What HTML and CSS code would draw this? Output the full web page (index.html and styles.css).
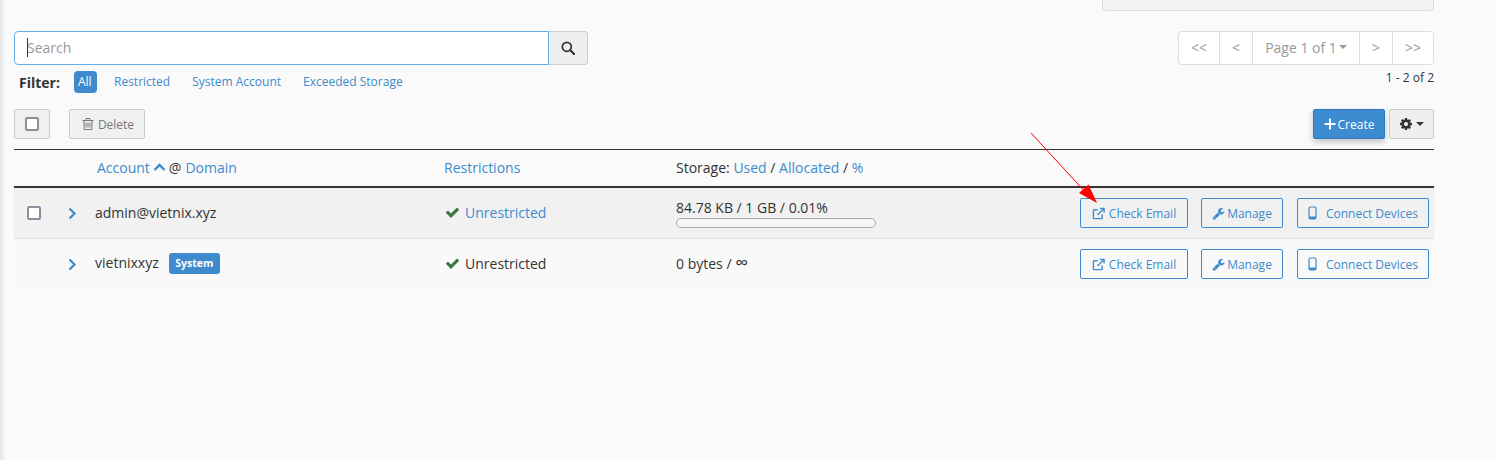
FILE: index.html
```html
<!DOCTYPE html>
<html lang="en">
<head>
<meta charset="utf-8">
<title>Email Accounts</title>
<link rel="stylesheet" href="styles.css">
</head>
<body>
<div class="page">
  <div class="notice-row"><div class="notice"></div></div>

  <div class="search-row">
    <div class="search-group">
      <div class="search-input"><span class="caret"></span><span class="placeholder">Search</span></div>
      <button class="search-btn"><svg class="i14" viewBox="0 0 14 14"><circle cx="5.800" cy="5.800" r="4.500" fill="none" stroke="#333" stroke-width="1.700"/><path d="M9.300 9.300L13 13" fill="none" stroke="#333" stroke-width="2.200" stroke-linecap="round"/></svg></button>
    </div>
    <div class="pager">
      <span class="pg pg-first">&lt;&lt;</span>
      <span class="pg pg-prev">&lt;</span>
      <span class="pg pg-page">Page 1 of 1<i class="caret-down"></i></span>
      <span class="pg pg-next">&gt;</span>
      <span class="pg pg-last">&gt;&gt;</span>
    </div>
  </div>

  <div class="filter-row">
    <div class="filters">
      <strong class="filter-label">Filter:</strong>
      <a class="pill active">All</a>
      <a class="pill">Restricted</a>
      <a class="pill">System Account</a>
      <a class="pill">Exceeded Storage</a>
    </div>
    <div class="count">1 - 2 of 2</div>
  </div>

  <div class="action-row">
    <div class="action-left">
      <button class="btn-box"><span class="checkbox"></span></button>
      <button class="btn-delete"><svg class="i-trash" viewBox="0 0 1792 1792"><path d="M704 736v576q0 14-9 23t-23 9h-64q-14 0-23-9t-9-23v-576q0-14 9-23t23-9h64q14 0 23 9t9 23zm256 0v576q0 14-9 23t-23 9h-64q-14 0-23-9t-9-23v-576q0-14 9-23t23-9h64q14 0 23 9t9 23zm256 0v576q0 14-9 23t-23 9h-64q-14 0-23-9t-9-23v-576q0-14 9-23t23-9h64q14 0 23 9t9 23zm128 724v-948h-896v948q0 22 7 40.500t14.500 27 10.500 8.500h832q3 0 10.500-8.500t14.500-27 7-40.500zm-672-1076h448l-48-117q-7-9-17-11h-317q-10 2-17 11zm928 32v64q0 14-9 23t-23 9h-96v948q0 83-47 143.500t-113 60.500h-832q-66 0-113-58.500t-47-141.500v-952h-96q-14 0-23-9t-9-23v-64q0-14 9-23t23-9h309l70-167q15-37 54-63t79-26h320q40 0 79 26t54 63l70 167h309q14 0 23 9t9 23z"/></svg>Delete</button>
    </div>
    <div class="action-right">
      <button class="btn-create"><svg class="i12" viewBox="0 0 12 12"><path d="M6 0.500v11M0.500 6h11" fill="none" stroke="currentColor" stroke-width="2"/></svg>Create</button>
      <button class="btn-gear"><svg class="i13" viewBox="0 0 1792 1792"><path d="M1152 896q0-106-75-181t-181-75-181 75-75 181 75 181 181 75 181-75 75-181zm512-109v222q0 12-8 23t-20 13l-185 28q-19 54-39 91 35 50 107 138 10 12 10 25t-9 23q-27 37-99 108t-94 71q-12 0-26-9l-138-108q-44 23-91 38-16 136-29 186-7 28-36 28h-222q-14 0-24.500-8.500t-11.500-21.500l-28-184q-49-16-90-37l-141 107q-10 9-25 9-14 0-25-11-126-114-165-168-7-10-7-23 0-12 8-23 15-21 51-66.500t54-70.500q-27-50-41-99l-183-27q-13-2-21-12.500t-8-23.500v-222q0-12 8-23t19-13l186-28q14-46 39-92-40-57-107-138-10-12-10-24 0-10 9-23 26-36 98.500-107.500t94.500-71.500q13 0 26 10l138 107q44-23 91-38 16-136 29-186 7-28 36-28h222q14 0 24.500 8.500t11.500 21.500l28 184q49 16 90 37l142-107q9-9 24-9 13 0 25 10 129 119 165 170 7 8 7 22 0 12-8 23-15 21-51 66.500t-54 70.500q26 50 41 98l183 28q13 2 21 12.500t8 23.500z"/></svg><i class="caret-down dark"></i></button>
    </div>
  </div>

  <div class="table">
    <div class="row head">
      <div class="c-sel"></div>
      <div class="c-acct head-acct"><a>Account</a><svg class="chev-up" viewBox="0 0 12 8"><path d="M1 7l5-5 5 5" fill="none" stroke="currentColor" stroke-width="2.400"/></svg><span class="at">@</span><a>Domain</a></div>
      <div class="c-rest"><a>Restrictions</a></div>
      <div class="c-stor">Storage: <a>Used</a> / <a>Allocated</a> / <a>%</a></div>
      <div class="c-act"></div>
    </div>

    <div class="row body alt">
      <div class="c-sel"><span class="checkbox"></span><svg class="chev" viewBox="0 0 9 13"><path d="M1.500 1.500l5 5-5 5" fill="none" stroke="currentColor" stroke-width="2.200"/></svg></div>
      <div class="c-acct"><span class="name">admin@vietnix.xyz</span></div>
      <div class="c-rest"><svg class="ok" viewBox="0 0 1792 1792"><path d="M1671 566q0 40-28 68l-724 724-136 136q-28 28-68 28t-68-28l-136-136-362-362q-28-28-28-68t28-68l136-136q28-28 68-28t68 28l294 295 656-657q28-28 68-28t68 28l136 136q28 28 28 68z"/></svg><a>Unrestricted</a></div>
      <div class="c-stor c-usage"><div class="usage">84.78 KB / 1 GB / 0.01%</div><div class="bar"></div></div>
      <div class="c-act">
        <a class="ab ab-check"><svg class="ai" viewBox="0 0 14 14"><path d="M11 8v3.500a1 1 0 0 1-1 1H2.500a1 1 0 0 1-1-1V4a1 1 0 0 1 1-1H6M6 8.500L12.500 2M8.500 1.500h4.500V6" fill="none" stroke="currentColor" stroke-width="1.500"/></svg>Check Email</a>
        <a class="ab ab-manage"><svg class="ai wr" viewBox="0 0 1792 1792"><path fill="currentColor" d="M448 1472q0-26-19-45t-45-19-45 19-19 45 19 45 45 19 45-19 19-45zm644-420l-682 682q-37 37-90 37-52 0-91-37l-106-108q-38-36-38-90 0-53 38-91l681-681q39 98 114.500 173.500t173.500 114.500zm634-435q0 39-23 106-47 134-164.500 217.500t-258.500 83.500q-185 0-316.500-131.500t-131.500-316.500 131.500-316.500 316.500-131.500q58 0 121.500 16.500t107.500 46.500q16 11 16 28t-16 28l-293 169v224l193 107q5-3 79-48.500t135.500-81 70.500-35.500q15 0 23.500 10t8.500 25z"/></svg>Manage</a>
        <a class="ab ab-conn"><svg class="ai ph" viewBox="0 0 9 14"><rect x="1" y="1" width="7" height="12" rx="1.500" fill="none" stroke="currentColor" stroke-width="1.200"/><path d="M1 10.500h7v1.500a1 1 0 0 1-1 1H2a1 1 0 0 1-1-1z" fill="currentColor"/></svg>Connect Devices</a>
      </div>
    </div>

    <div class="row body last">
      <div class="c-sel"><span class="checkbox hidden"></span><svg class="chev" viewBox="0 0 9 13"><path d="M1.500 1.500l5 5-5 5" fill="none" stroke="currentColor" stroke-width="2.200"/></svg></div>
      <div class="c-acct"><span class="name">vietnixxyz</span><span class="badge">System</span></div>
      <div class="c-rest"><svg class="ok" viewBox="0 0 1792 1792"><path d="M1671 566q0 40-28 68l-724 724-136 136q-28 28-68 28t-68-28l-136-136-362-362q-28-28-28-68t28-68l136-136q28-28 68-28t68 28l294 295 656-657q28-28 68-28t68 28l136 136q28 28 28 68z"/></svg><span>Unrestricted</span></div>
      <div class="c-stor"><div>0 bytes / <span class="inf">∞</span></div></div>
      <div class="c-act">
        <a class="ab ab-check"><svg class="ai" viewBox="0 0 14 14"><path d="M11 8v3.500a1 1 0 0 1-1 1H2.500a1 1 0 0 1-1-1V4a1 1 0 0 1 1-1H6M6 8.500L12.500 2M8.500 1.500h4.500V6" fill="none" stroke="currentColor" stroke-width="1.500"/></svg>Check Email</a>
        <a class="ab ab-manage"><svg class="ai wr" viewBox="0 0 1792 1792"><path fill="currentColor" d="M448 1472q0-26-19-45t-45-19-45 19-19 45 19 45 45 19 45-19 19-45zm644-420l-682 682q-37 37-90 37-52 0-91-37l-106-108q-38-36-38-90 0-53 38-91l681-681q39 98 114.500 173.500t173.500 114.500zm634-435q0 39-23 106-47 134-164.500 217.500t-258.500 83.500q-185 0-316.500-131.500t-131.500-316.500 131.500-316.500 316.500-131.500q58 0 121.500 16.500t107.500 46.500q16 11 16 28t-16 28l-293 169v224l193 107q5-3 79-48.500t135.500-81 70.500-35.500q15 0 23.500 10t8.500 25z"/></svg>Manage</a>
        <a class="ab ab-conn"><svg class="ai ph" viewBox="0 0 9 14"><rect x="1" y="1" width="7" height="12" rx="1.500" fill="none" stroke="currentColor" stroke-width="1.200"/><path d="M1 10.500h7v1.500a1 1 0 0 1-1 1H2a1 1 0 0 1-1-1z" fill="currentColor"/></svg>Connect Devices</a>
      </div>
    </div>
  </div>
</div>

<svg class="arrow" viewBox="0 0 1496 460"><path d="M1031 133L1088 195" stroke="#f00" stroke-width="1" fill="none"/><path d="M1079 193L1088.500 184.500L1097 203z" fill="#f00"/></svg>
</body>
</html>
```
FILE: styles.css
```css
* { box-sizing: border-box; }
html, body { margin: 0; height: 100%; }
body {
  background: #fafafa;
  font-family: "Open Sans", "Liberation Sans", sans-serif;
  font-size: 14px;
  color: #333;
  overflow: hidden;
  position: relative;
}
body::before {
  content: "";
  position: absolute;
  left: 0; top: 0; bottom: 0;
  width: 6px;
  background: linear-gradient(to right, #e6e6e6, #fafafa);
}
a { color: #3d8bcd; text-decoration: none; }
button { font-family: inherit; margin: 0; }
svg { display: block; flex: none; }

.page { width: 1434px; padding-left: 14px; }

.notice-row { display: flex; justify-content: flex-end; height: 31px; }
.notice {
  width: 332px; height: 11px;
  background: #f4f4f4;
  border: 1px solid #ddd; border-top: 0;
  border-radius: 0 0 4px 4px;
}

.search-row { display: flex; justify-content: space-between; height: 34px; }
.search-group { display: flex; width: 574px; }
.search-input {
  flex: 1; display: flex; align-items: center;
  background: #fff;
  border: 1px solid #66afe9;
  border-radius: 4px 0 0 4px;
  padding: 0 0 2px 12px;
  font-size: 14px; color: #999;
}
.caret { width: 1px; height: 19px; background: #333; margin-right: -1px; }
.search-btn {
  width: 39px; padding: 0;
  display: flex; align-items: center; justify-content: center;
  background: #efefef;
  border: 1px solid #ccc; border-left: 0;
  border-radius: 0 4px 4px 0;
  color: #333;
}
.i14 { width: 14px; height: 14px; }
.i12 { width: 12px; height: 12px; fill: currentColor; }
.i13 { width: 14px; height: 14px; fill: #333; }
.i-trash { width: 14px; height: 14px; fill: currentColor; }

.pager {
  display: flex; height: 34px;
  background: #fff;
  border: 1px solid #ddd;
  border-radius: 4px;
  color: #999; font-size: 14px;
}
.pg { display: flex; align-items: center; justify-content: center; border-left: 1px solid #ddd; padding-bottom: 2px; }
.pg-first { border-left: 0; width: 40px; }
.pg-prev { width: 33px; }
.pg-page { width: 107px; }
.pg-next { width: 33px; }
.pg-last { width: 41px; }
.caret-down {
  display: inline-block; width: 0; height: 0; margin-left: 2px;
  border-top: 4px solid #999;
  border-left: 4px solid transparent;
  border-right: 4px solid transparent;
}
.caret-down.dark { border-top-color: #333; margin-left: 3px; }

.filter-row { display: flex; justify-content: space-between; align-items: flex-start; height: 44px; padding-top: 6px; }
.filters { display: flex; align-items: center; font-size: 12px; }
.filter-label { font-size: 14px; width: 60px; padding-left: 5px; color: #333; }
.pill { line-height: 22px; height: 22px; margin-right: 22px; border-radius: 4px; }
.pill.active { background: #3d8bcd; color: #fff; padding: 0 4px; margin-right: 17px; width: 23px; }
.count { font-size: 12px; line-height: 12px; margin-top: 1px; color: #333; }

.action-row { display: flex; justify-content: space-between; height: 40px; }
.action-left, .action-right { display: flex; height: 30px; }
.btn-box {
  width: 36px; height: 30px; padding: 0; margin-right: 19px;
  display: flex; align-items: center; justify-content: center;
  background: #f0f0f0; border: 1px solid #ccc; border-radius: 2px;
}
.checkbox {
  display: block; width: 14px; height: 14px;
  background: #fff;
  border: 2px solid #8e8e9e;
  border-radius: 2px;
}
.checkbox.hidden { visibility: hidden; }
.btn-delete {
  width: 76px; height: 30px; padding: 0 0 0 1px;
  display: flex; align-items: center; justify-content: center; gap: 3px;
  background: #f0f0f0; border: 1px solid #ccc; border-radius: 2px;
  color: #777; font-size: 12px;
}
.btn-create {
  width: 72px; height: 30px; padding: 0; margin-right: 4px;
  display: flex; align-items: center; justify-content: center; gap: 2px;
  background: #3d8bd0; border: 1px solid #2f7abf; border-radius: 2px;
  color: #fff; font-size: 12px;
  box-shadow: 0 3px 6px rgba(0,0,0,.22);
}
.btn-gear {
  width: 45px; height: 30px; padding: 0;
  display: flex; align-items: center; justify-content: center;
  background: #efefef; border: 1px solid #ccc; border-radius: 2px;
}

.table { width: 1420px; border-top: 1px solid #333; }
.row { display: grid; grid-template-columns: 81px 349px 232px 1fr auto; align-items: center; }
.head { height: 36px; border-bottom: 2px solid #333; box-sizing: content-box; }
.body { height: 50px; box-sizing: content-box; }
.alt { background: #f1f1f1; border-bottom: 1px solid #ddd; }
.last { background: #f9f9f9; }
.c-acct, .c-rest, .c-stor { padding-bottom: 2px; }
.c-usage { padding-bottom: 0; }
.head-acct { display: flex; align-items: center; padding-left: 2px; }
.chev-up { width: 13px; height: 8px; margin: 0 3px 0 3px; color: #3d8bcd; }
.at { margin-right: 4px; }
.c-sel { display: flex; align-items: center; padding-left: 13px; }
.chev { width: 9px; height: 13px; margin-left: 27px; color: #3d8bcd; }
.c-rest { display: flex; align-items: center; }
.ok { width: 15px; height: 15px; margin: 0 5px 0 1px; fill: #3c763d; }
.usage { line-height: 18px; margin-top: 1px; }
.bar { width: 200px; height: 10px; margin-top: 1px; border: 1px solid #aaa; border-radius: 5px; background: #f5f5f5; }
.inf { font-size: 18px; line-height: 14px; }
.badge {
  display: inline-block; margin-left: 10px; vertical-align: 1px;
  width: 51px; height: 21px; line-height: 21px; text-align: center;
  background: #3d8bcd; color: #fff;
  font-size: 10.500px; font-weight: 700; border-radius: 3px;
}
.c-act { display: flex; justify-content: flex-end; padding-right: 5px; }
.ab {
  display: flex; align-items: center; justify-content: center;
  height: 30px; white-space: nowrap;
  border: 1px solid #3d8bcd; border-radius: 2px;
  font-size: 12px; color: #3d8bcd;
  background: transparent;
}
.ab-check { width: 108px; margin-right: 13px; }
.ab-manage { width: 82px; margin-right: 14px; }
.ab-conn { width: 132px; }
.ai { width: 13px; height: 13px; margin-right: 4px; color: #3d8bcd; }
.wr { margin-right: 2px; }
.ph { width: 9px; height: 14px; margin-right: 9px; }

.arrow { position: absolute; left: 0; top: 0; width: 1496px; height: 460px; pointer-events: none; }
```
